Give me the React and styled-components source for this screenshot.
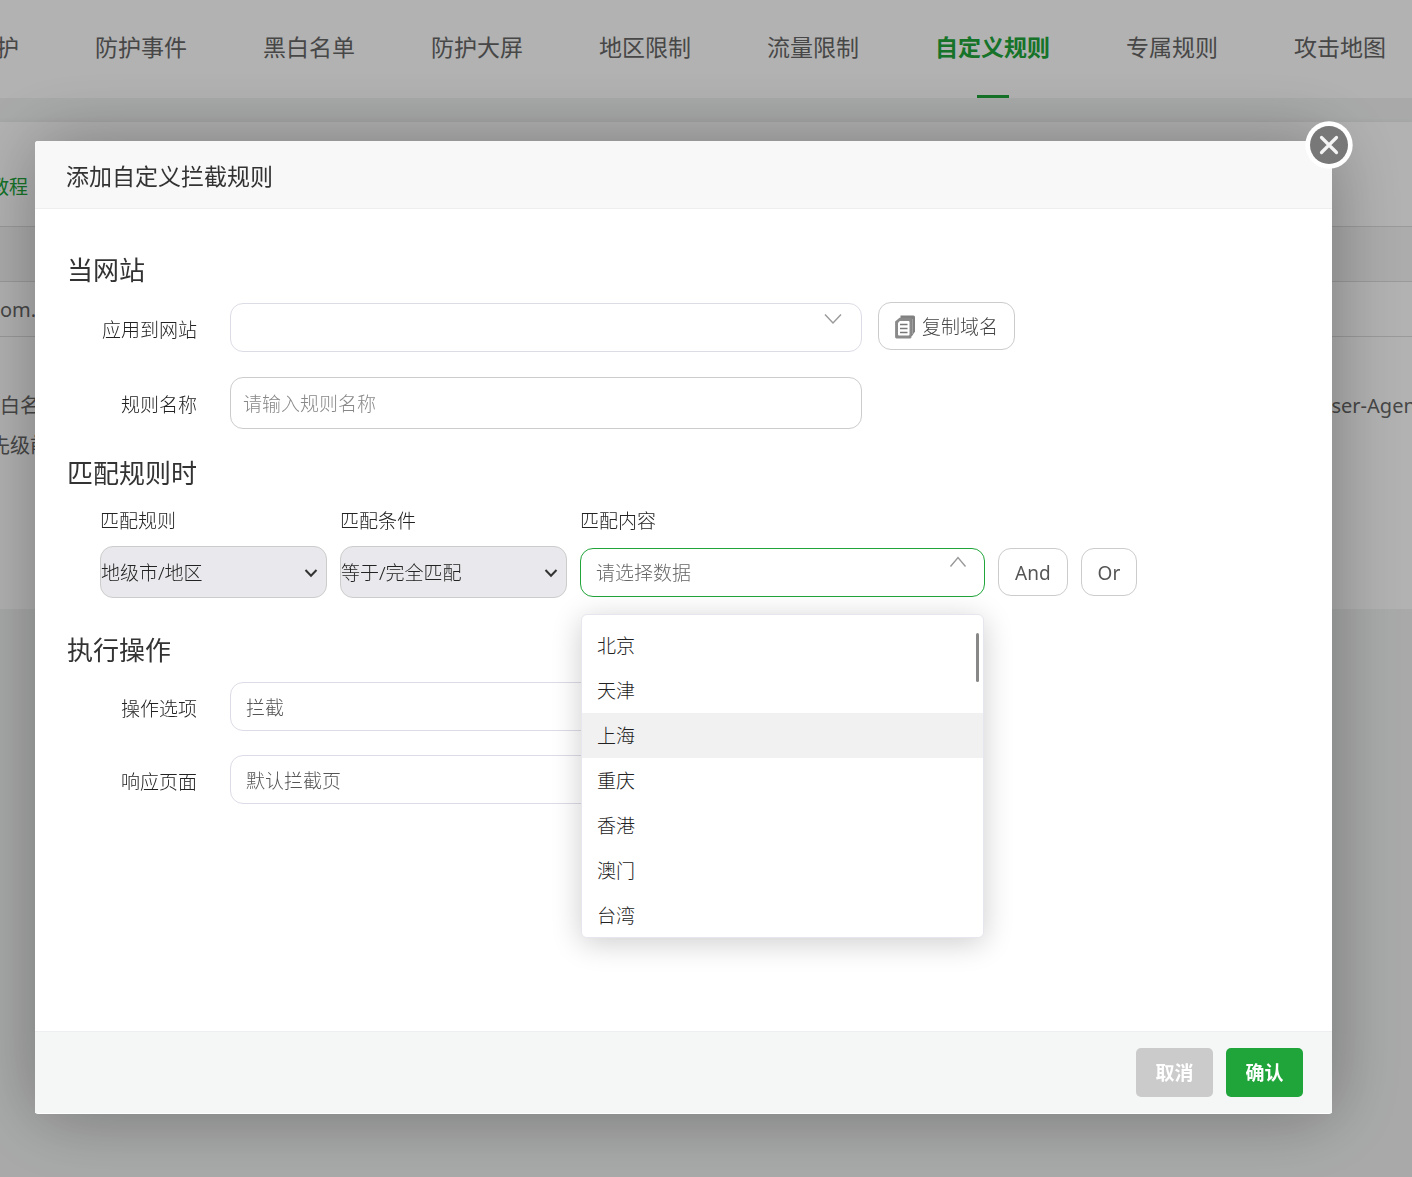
import React, { useState } from 'react';
import styled, { createGlobalStyle } from 'styled-components';

const GlobalStyle = createGlobalStyle`
    * {
        box-sizing: border-box;
    }

    body {
        margin: 0;
        background: #f2f3f3;
        color: #222;
        font-family: "Noto Sans", "Noto Sans CJK SC", sans-serif;
        font-size: 19px;
        font-weight: 300;
        line-height: 28px;
        overflow: hidden;
    }

    button, input, select {
        font: inherit;
        color: inherit;
    }
`;

const Nav = styled.nav`
    display: flex;
    gap: 76px;
    height: 98px;
    margin-left: -4px;
    background: #fff;
    white-space: nowrap;
    overflow: hidden;
`;

const NavLink = styled.a`
    display: flex;
    flex-direction: column;
    align-items: center;
    justify-content: space-between;
    flex-shrink: 0;
    padding-top: 30px;
    color: #666;
    font-size: 23px;
    font-weight: 400;
    line-height: 34px;
    text-decoration: none;

    ${props => props.$active && `
    color: #20a53a;
    font-weight: bold;

    &::after {
        content: "";
        width: 32px;
        height: 3px;
        background: #20a53a;
    }
    `};
`;

const Card = styled.main`
    height: 487px;
    margin-top: 24px;
    background: #fff;
    box-shadow: 0 0 6px rgba(0, 0, 0, 0.06);
    color: #666;
    font-weight: 400;
    white-space: nowrap;
    overflow: hidden;
`;

const CardTop = styled.div`
    display: flex;
    align-items: center;
    height: 104px;
    padding-top: 26px;
    margin-left: -10px;
`;

const GuideLink = styled.a`
    color: #20a53a;
    text-decoration: none;
`;

const TableRow = styled.div`
    display: flex;
    align-items: center;
    height: 55px;
    padding-top: 2px;
    border-top: 1px solid #ddd;
    background: ${props => (props.$head ? '#f6f6f6' : '#fff')};
    font-size: 20px;
`;

const Notes = styled.div`
    padding-top: 49px;
    border-top: 1px solid #ddd;
    font-size: 20px;
    line-height: 40px;
`;

const NoteLine = styled.div`
    display: flex;
    justify-content: space-between;
    margin-left: ${props => (props.$outdent ? '-10px' : '0')};
    margin-right: -11px;
`;

const Overlay = styled.div`
    position: fixed;
    inset: 0;
    display: flex;
    padding: 141px 80px 63px 35px;
    background: rgba(0, 0, 0, 0.3);
`;

const Dialog = styled.section`
    position: relative;
    display: flex;
    flex-direction: column;
    flex: 1;
    min-width: 0;
    background: #fff;
    border-radius: 3px;
    box-shadow: 1px 1px 72px rgba(0, 0, 0, 0.32);
`;

const DialogHeader = styled.header`
    padding: 18px 31px 15px;
    background: #f8f8f8;
    border-bottom: 1px solid #eee;
    border-radius: 3px 3px 0 0;
`;

const DialogTitle = styled.h1`
    margin: 0;
    color: #333;
    font-size: 23px;
    font-weight: 400;
    line-height: 34px;
`;

const CloseButton = styled.button`
    position: absolute;
    top: -20px;
    right: -21px;
    width: 48px;
    height: 48px;
    padding: 0;
    border: 0;
    background: none;
    cursor: pointer;

    svg {
        display: block;
    }
`;

const DialogBody = styled.form`
    flex: 1;
    padding: 43px 32px 0;
`;

const SectionTitle = styled.h2`
    margin: 0;
    color: #333;
    font-size: 26px;
    font-weight: 400;
    line-height: 36px;
`;

const Section = styled.section`
    margin-bottom: ${props => (props.$wide ? '34px' : '26px')};
`;

const FormRow = styled.div`
    display: flex;
    align-items: center;
    margin-top: ${props => (props.$first ? '14px' : '24px')};
`;

const RowLabel = styled.label`
    width: 130px;
    margin-right: 33px;
    padding-top: 4px;
    text-align: right;
`;

const SelectBox = styled.div`
    position: relative;
    display: flex;
    flex: 0 1 632px;

    > svg {
        position: absolute;
        top: 6px;
        right: 18px;
        pointer-events: none;
    }
`;

const SelectField = styled.select`
    width: 100%;
    height: 49px;
    padding: 2px 15px 0;
    appearance: none;
    background: #fff;
    border: 1px solid ${props => (props.$open ? '#20a53a' : '#dcdce6')};
    border-radius: 13px;
    color: ${props => (props.$open ? '#666' : '#555')};
    outline: none;
`;

const TextField = styled.input`
    flex: 0 1 632px;
    min-width: 0;
    height: 52px;
    padding: 2px 12px 0;
    border: 1px solid #ccc;
    border-radius: 13px;
    outline: none;

    &::placeholder {
        color: #888;
    }
`;

const OutlineButton = styled.button`
    display: flex;
    align-items: center;
    gap: 7px;
    height: 48px;
    padding: 2px 16px 0;
    background: #fff;
    border: 1px solid #ccc;
    border-radius: 13px;
    color: #444;
    white-space: nowrap;
    cursor: pointer;
`;

const CopyButton = styled(OutlineButton)`
    margin: 0 0 3px 16px;
`;

const LogicButton = styled(OutlineButton)`
    color: #555;
    font-weight: 400;
`;

const Conditions = styled.div`
    display: flex;
    align-items: flex-end;
    gap: 13px;
    margin: 16px 0 0 33px;
`;

const Condition = styled.div`
    display: flex;
    flex-direction: column;
    gap: 11px;
    flex: 0 1 ${props => props.$width};
`;

const ControlLine = styled.div`
    display: flex;
    align-items: center;
    gap: 13px;
    height: 52px;

    ${SelectBox} {
        flex: 1;
    }
`;

const GreySelect = styled.div`
    position: relative;
    display: flex;

    > svg {
        position: absolute;
        top: 21px;
        right: 9px;
        pointer-events: none;
    }
`;

const GreyField = styled.select`
    width: 100%;
    height: 52px;
    padding: 2px 0 0;
    appearance: none;
    background: #e9e9ed;
    border: 1px solid #ccc;
    border-radius: 13px;
`;

const Menu = styled.ul`
    position: absolute;
    z-index: 2;
    top: 66px;
    left: 1px;
    right: 1px;
    height: 324px;
    margin: 0;
    padding: 8px 0 0;
    background: #fff;
    border: 1px solid #e6e6ee;
    border-radius: 6px;
    box-shadow: 0 5px 30px rgba(0, 0, 0, 0.2);
    list-style: none;
    overflow: hidden;

    &::after {
        content: "";
        position: absolute;
        top: 18px;
        right: 4px;
        width: 3px;
        height: 49px;
        border-radius: 2px;
        background: #888;
    }
`;

const MenuItem = styled.li`
    height: 45px;
    padding: 1px 15px 0;
    background: ${props => (props.$hovered ? '#f1f1f1' : '#fff')};
    line-height: 45px;
    cursor: pointer;
`;

const DialogFooter = styled.footer`
    display: flex;
    justify-content: flex-end;
    gap: 13px;
    margin-bottom: 1px;
    padding: 16px 29px;
    background: #f5f7f6;
    border-top: 1px solid #edeff0;
`;

const ActionButton = styled.button`
    min-width: 77px;
    height: 49px;
    padding: 0 10px;
    border: 0;
    border-radius: 5px;
    background: ${props => (props.$primary ? '#20a53a' : '#cbcbcb')};
    color: #fff;
    font-weight: bold;
    cursor: pointer;
`;

const navItems = ['护', '防护事件', '黑白名单', '防护大屏', '地区限制', '流量限制', '自定义规则', '专属规则', '攻击地图'];
const regions = ['北京', '天津', '上海', '重庆', '香港', '澳门', '台湾'];

const ThinChevron = ({ up }) => (
    <svg width="20" height="18" viewBox="0 0 20 18" fill="none" stroke="#999" strokeWidth="1.4">
        <path d={up ? 'M3.5 12.5 11 3.5l7.5 9' : 'M1 5.5 9 14l8-8.500'} />
    </svg>
);

const BoldChevron = () => (
    <svg width="14" height="12" viewBox="0 0 14 12" fill="none" stroke="#333" strokeWidth="2">
        <path d="M1.500 3 7 8.800 12.500 3" />
    </svg>
);

const CopyIcon = () => (
    <svg width="20" height="24" viewBox="0 0 20 24">
        <path d="M5.500 .5h13A1.500 1.500 0 0 1 20 2v14.500l-3 4.500H5.500z" fill="#808080" />
        <path d="M17.500 4v15" stroke="#a0a0a0" strokeWidth="1" />
        <path d="M4.500 2.800H15.500a1 1 0 0 1 1 1V22a1.400 1.400 0 0 1-1.400 1.400H1.500A1.400 1.400 0 0 1 .1 22V6.500z" fill="#8a8a8a" />
        <path d="M4.800 6H13.500a1 1 0 0 1 1 1v12.500a1 1 0 0 1-1 1h-9.500a1 1 0 0 1-1-1V8z" fill="#fff" />
        <path d="M5 9.500h7.500M5 13.500h7.500M5 17.500h7.500" stroke="#777" strokeWidth="1.600" />
    </svg>
);

const CloseIcon = () => (
    <svg width="48" height="48" viewBox="0 0 48 48">
        <circle cx="24" cy="24" r="23.700" fill="#fff" />
        <circle cx="24" cy="24" r="19" fill="#787878" />
        <path d="m16.500 16.500 15 15m0-15-15 15" stroke="#f4f4f4" strokeWidth="3.200" strokeLinecap="round" />
    </svg>
);

const App = () => {
    const [hovered, setHovered] = useState('上海');

    return (
        <>
            <GlobalStyle />
            <Nav>
                {navItems.map(item => (
                    <NavLink key={item} href="#" $active={item === '自定义规则'}>{item}</NavLink>
                ))}
            </Nav>
            <Card>
                <CardTop>
                    <GuideLink href="#">教程</GuideLink>
                </CardTop>
                <TableRow $head />
                <TableRow>om.</TableRow>
                <Notes>
                    <NoteLine>
                        <span>白名</span>
                        <span>User-Agent</span>
                    </NoteLine>
                    <NoteLine $outdent>先级前</NoteLine>
                </Notes>
            </Card>

            <Overlay>
                <Dialog role="dialog" aria-labelledby="dialog-title">
                    <DialogHeader>
                        <DialogTitle id="dialog-title">添加自定义拦截规则</DialogTitle>
                    </DialogHeader>
                    <CloseButton type="button" aria-label="关闭">
                        <CloseIcon />
                    </CloseButton>

                    <DialogBody>
                        <Section>
                            <SectionTitle>当网站</SectionTitle>
                            <FormRow $first>
                                <RowLabel htmlFor="site">应用到网站</RowLabel>
                                <SelectBox>
                                    <SelectField id="site">
                                        <option></option>
                                    </SelectField>
                                    <ThinChevron />
                                </SelectBox>
                                <CopyButton type="button">
                                    <CopyIcon />
                                    复制域名
                                </CopyButton>
                            </FormRow>
                            <FormRow>
                                <RowLabel htmlFor="name">规则名称</RowLabel>
                                <TextField id="name" placeholder="请输入规则名称" />
                            </FormRow>
                        </Section>

                        <Section $wide>
                            <SectionTitle>匹配规则时</SectionTitle>
                            <Conditions>
                                <Condition $width="227px">
                                    <label htmlFor="rule">匹配规则</label>
                                    <GreySelect>
                                        <GreyField id="rule">
                                            <option>地级市/地区</option>
                                        </GreyField>
                                        <BoldChevron />
                                    </GreySelect>
                                </Condition>
                                <Condition $width="227px">
                                    <label htmlFor="condition">匹配条件</label>
                                    <GreySelect>
                                        <GreyField id="condition">
                                            <option>等于/完全匹配</option>
                                        </GreyField>
                                        <BoldChevron />
                                    </GreySelect>
                                </Condition>
                                <Condition $width="405px">
                                    <label htmlFor="content">匹配内容</label>
                                    <ControlLine>
                                        <SelectBox>
                                            <SelectField id="content" $open>
                                                <option>请选择数据</option>
                                            </SelectField>
                                            <ThinChevron up />
                                            <Menu role="listbox">
                                                {regions.map(region => (
                                                    <MenuItem
                                                        key={region}
                                                        role="option"
                                                        $hovered={region === hovered}
                                                        onMouseEnter={() => setHovered(region)}
                                                    >
                                                        {region}
                                                    </MenuItem>
                                                ))}
                                            </Menu>
                                        </SelectBox>
                                    </ControlLine>
                                </Condition>
                                <ControlLine>
                                    <LogicButton type="button">And</LogicButton>
                                    <LogicButton type="button">Or</LogicButton>
                                </ControlLine>
                            </Conditions>
                        </Section>

                        <Section>
                            <SectionTitle>执行操作</SectionTitle>
                            <FormRow $first>
                                <RowLabel htmlFor="action">操作选项</RowLabel>
                                <SelectBox>
                                    <SelectField id="action">
                                        <option>拦截</option>
                                    </SelectField>
                                </SelectBox>
                            </FormRow>
                            <FormRow>
                                <RowLabel htmlFor="page">响应页面</RowLabel>
                                <SelectBox>
                                    <SelectField id="page">
                                        <option>默认拦截页</option>
                                    </SelectField>
                                </SelectBox>
                            </FormRow>
                        </Section>
                    </DialogBody>

                    <DialogFooter>
                        <ActionButton type="button">取消</ActionButton>
                        <ActionButton type="button" $primary>确认</ActionButton>
                    </DialogFooter>
                </Dialog>
            </Overlay>
        </>
    );
};

export default App;
